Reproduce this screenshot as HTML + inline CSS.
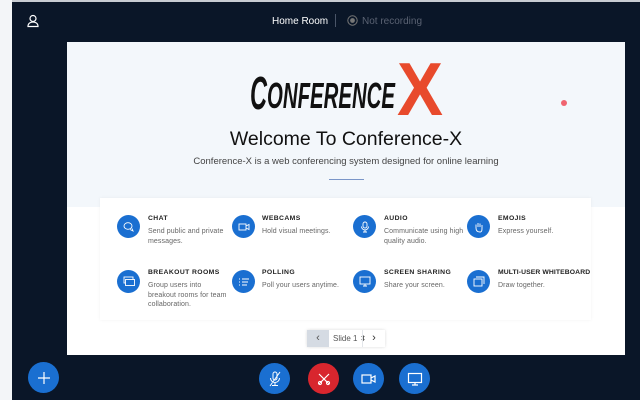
<!DOCTYPE html>
<html><head><meta charset="utf-8"><style>
*{margin:0;padding:0;box-sizing:border-box}
body{width:640px;height:400px;overflow:hidden;background:#0a1628;font-family:"Liberation Sans",sans-serif;position:relative}
.abs{position:absolute}
.strip{left:0;top:0;width:12px;height:400px;background:#f3f5f8}
.topline{left:0;top:0;width:640px;height:2px;background:#c8ccd2}
.slide{left:67px;top:42px;width:558px;height:313px;background:#fff}
.upper{left:67px;top:42px;width:558px;height:165px;background:#f3f7fb}
.card{left:100px;top:198px;width:491px;height:122px;background:#fff;box-shadow:0 0 3px rgba(0,0,0,.06)}
.circ{border-radius:50%;background:#1a6fd1;display:flex;align-items:center;justify-content:center}
.ft{font-size:6.8px;font-weight:bold;letter-spacing:.4px;color:#222;white-space:nowrap}
.fd{font-size:7px;color:#666;line-height:9.5px;letter-spacing:.1px;white-space:nowrap}
.btn{width:31px;height:31px;top:363px}
</style></head><body>
<div class="abs topline"></div>
<div class="abs strip"></div>
<svg class="abs" style="left:27px;top:14px" width="12" height="14" viewBox="0 0 12 14"><circle cx="6" cy="4.5" r="3" fill="none" stroke="#fff" stroke-width="1.2"/><path d="M1 12.5c0-3 2.3-4.5 5-4.5s5 1.5 5 4.5z" fill="none" stroke="#fff" stroke-width="1.2"/></svg>
<div class="abs" style="left:272px;top:16px;color:#fff;font-size:10px">Home Room</div>
<div class="abs" style="left:335px;top:14px;width:1px;height:13px;background:#4a5568"></div>
<svg class="abs" style="left:347px;top:15px" width="11" height="11"><circle cx="5.5" cy="5.5" r="4.7" fill="none" stroke="#777" stroke-width="1"/><circle cx="5.5" cy="5.5" r="2.4" fill="#777"/></svg>
<div class="abs" style="left:362px;top:16px;color:#5a6272;font-size:10px">Not recording</div>

<div class="abs slide"></div>
<div class="abs upper"></div>
<svg class="abs" style="left:0;top:0" width="640" height="130">
<text x="250" y="109" font-family="Liberation Sans" font-weight="bold" font-style="italic" font-size="46" fill="#111" textLength="17" lengthAdjust="spacingAndGlyphs">C</text>
<text x="267" y="108" font-family="Liberation Sans" font-weight="bold" font-style="italic" font-size="36" fill="#111" textLength="128" lengthAdjust="spacingAndGlyphs">ONFERENCE</text>
<text x="397" y="115" font-family="Liberation Sans" font-weight="bold" font-size="75" fill="#e84a2c" textLength="46" lengthAdjust="spacingAndGlyphs">X</text>
</svg>
<div class="abs" style="left:561px;top:100px;width:6px;height:6px;border-radius:50%;background:#f06470"></div>
<div class="abs" style="left:67px;width:558px;top:128px;text-align:center;font-size:19.5px;color:#111">Welcome To Conference-X</div>
<div class="abs" style="left:67px;width:558px;top:156px;text-align:center;font-size:9.5px;color:#444">Conference-X is a web conferencing system designed for online learning</div>
<div class="abs" style="left:329px;top:179px;width:35px;height:1px;background:#7a96c8"></div>

<div class="abs card"></div>
<div class="abs circ" style="left:117px;top:215px;width:23px;height:23px"><svg width="12" height="12" viewBox="0 0 12 12"><ellipse cx="5" cy="5" rx="4" ry="3.3" fill="none" stroke="#fff" stroke-width=".9"/><path d="M7 8.5l3 1.5-1-2.5" fill="none" stroke="#fff" stroke-width=".9"/></svg></div>
<div class="abs ft" style="left:148px;top:215px">CHAT</div>
<div class="abs fd" style="left:148px;top:227px">Send public and private<br>messages.</div>
<div class="abs circ" style="left:232px;top:215px;width:23px;height:23px"><svg width="12" height="10"><rect x="1" y="2" width="7" height="6" fill="none" stroke="#fff" stroke-width=".9"/><path d="M8 4l3-1.5v5L8 6" fill="none" stroke="#fff" stroke-width=".9"/></svg></div>
<div class="abs ft" style="left:262px;top:215px">WEBCAMS</div>
<div class="abs fd" style="left:262px;top:227px">Hold visual meetings.</div>
<div class="abs circ" style="left:353px;top:215px;width:23px;height:23px"><svg width="10" height="12"><rect x="3" y="1" width="4" height="6" rx="2" fill="none" stroke="#fff" stroke-width=".9"/><path d="M1.5 5.5a3.5 3.5 0 0 0 7 0M5 9v2M3 11h4" fill="none" stroke="#fff" stroke-width=".9"/></svg></div>
<div class="abs ft" style="left:384px;top:215px">AUDIO</div>
<div class="abs fd" style="left:384px;top:227px">Communicate using high<br>quality audio.</div>
<div class="abs circ" style="left:467px;top:215px;width:23px;height:23px"><svg width="12" height="12"><path d="M3 7V3.5M5 6V2M7 6V2.5M9 7V4M3 7c0 3 2 4 4 4s2-2 2-4" fill="none" stroke="#fff" stroke-width=".9"/></svg></div>
<div class="abs ft" style="left:498px;top:215px">EMOJIS</div>
<div class="abs fd" style="left:498px;top:227px">Express yourself.</div>
<div class="abs circ" style="left:117px;top:270px;width:23px;height:23px"><svg width="12" height="11"><rect x="1" y="1" width="9" height="6" fill="none" stroke="#fff" stroke-width=".9"/><rect x="2.5" y="3.5" width="9" height="6" fill="#1a6fd1" stroke="#fff" stroke-width=".9"/></svg></div>
<div class="abs ft" style="left:148px;top:269px">BREAKOUT ROOMS</div>
<div class="abs fd" style="left:148px;top:281px">Group users into<br>breakout rooms for team<br>collaboration.</div>
<div class="abs circ" style="left:232px;top:270px;width:23px;height:23px"><svg width="12" height="10"><path d="M1 2h1M4 2h7M1 5h1M4 5h6M1 8h1M4 8h5" stroke="#fff" stroke-width=".9"/></svg></div>
<div class="abs ft" style="left:262px;top:269px">POLLING</div>
<div class="abs fd" style="left:262px;top:281px">Poll your users anytime.</div>
<div class="abs circ" style="left:353px;top:270px;width:23px;height:23px"><svg width="12" height="11"><rect x="1" y="1" width="10" height="7" fill="none" stroke="#fff" stroke-width=".9"/><path d="M6 8v2M4 10h4" stroke="#fff" stroke-width=".9"/></svg></div>
<div class="abs ft" style="left:384px;top:269px">SCREEN SHARING</div>
<div class="abs fd" style="left:384px;top:281px">Share your screen.</div>
<div class="abs circ" style="left:467px;top:270px;width:23px;height:23px"><svg width="12" height="11"><rect x="1" y="3" width="8" height="7" fill="none" stroke="#fff" stroke-width=".9"/><path d="M3 1h8v7" fill="none" stroke="#fff" stroke-width=".9"/></svg></div>
<div class="abs ft" style="left:498px;top:269px;letter-spacing:.1px">MULTI-USER WHITEBOARD</div>
<div class="abs fd" style="left:498px;top:281px">Draw together.</div>

<div class="abs" style="left:307px;top:330px;width:78px;height:17px;background:#fff;box-shadow:0 0 3px rgba(0,0,0,.15)"></div>
<div class="abs" style="left:307px;top:330px;width:22px;height:17px;background:#d5dbe3;color:#555;font-size:11px;text-align:center;line-height:16px">‹</div>
<div class="abs" style="left:333px;top:334px;font-size:8px;color:#555;white-space:nowrap">Slide 1 ⬍</div>
<div class="abs" style="left:362px;top:330px;width:1px;height:17px;background:#e3e6ea"></div>
<div class="abs" style="left:363px;top:330px;width:22px;height:17px;color:#333;font-size:11px;text-align:center;line-height:16px">›</div>

<div class="abs circ" style="left:28px;top:362px;width:31px;height:31px"><svg width="14" height="14"><path d="M7 1v12M1 7h12" stroke="#fff" stroke-width="1.2"/></svg></div>
<div class="abs circ btn" style="left:259px"><svg width="14" height="16"><rect x="5" y="1" width="4" height="8" rx="2" fill="none" stroke="#fff" stroke-width="1"/><path d="M2.5 7a4.5 4.5 0 0 0 9 0M7 11.5v2.5M4 14.5h6M2 15L12 1" fill="none" stroke="#fff" stroke-width="1"/></svg></div>
<div class="abs circ btn" style="left:308px;background:#d8262e"><svg width="14" height="14"><path d="M2 2l10 10M12 2L2 12" stroke="#fff" stroke-width="1.2"/><circle cx="3" cy="11" r="1.6" fill="none" stroke="#fff"/><circle cx="11" cy="11" r="1.6" fill="none" stroke="#fff"/></svg></div>
<div class="abs circ btn" style="left:353px"><svg width="16" height="12"><rect x="1" y="2" width="9" height="8" fill="none" stroke="#fff" stroke-width="1.2"/><path d="M10 5l4-2v6l-4-2" fill="none" stroke="#fff" stroke-width="1.2"/></svg></div>
<div class="abs circ btn" style="left:399px"><svg width="16" height="14"><rect x="1.5" y="1.5" width="13" height="9" fill="none" stroke="#fff" stroke-width="1.2"/><path d="M8 10.5v2M5 13h6" stroke="#fff" stroke-width="1.2"/></svg></div>
</body></html>
